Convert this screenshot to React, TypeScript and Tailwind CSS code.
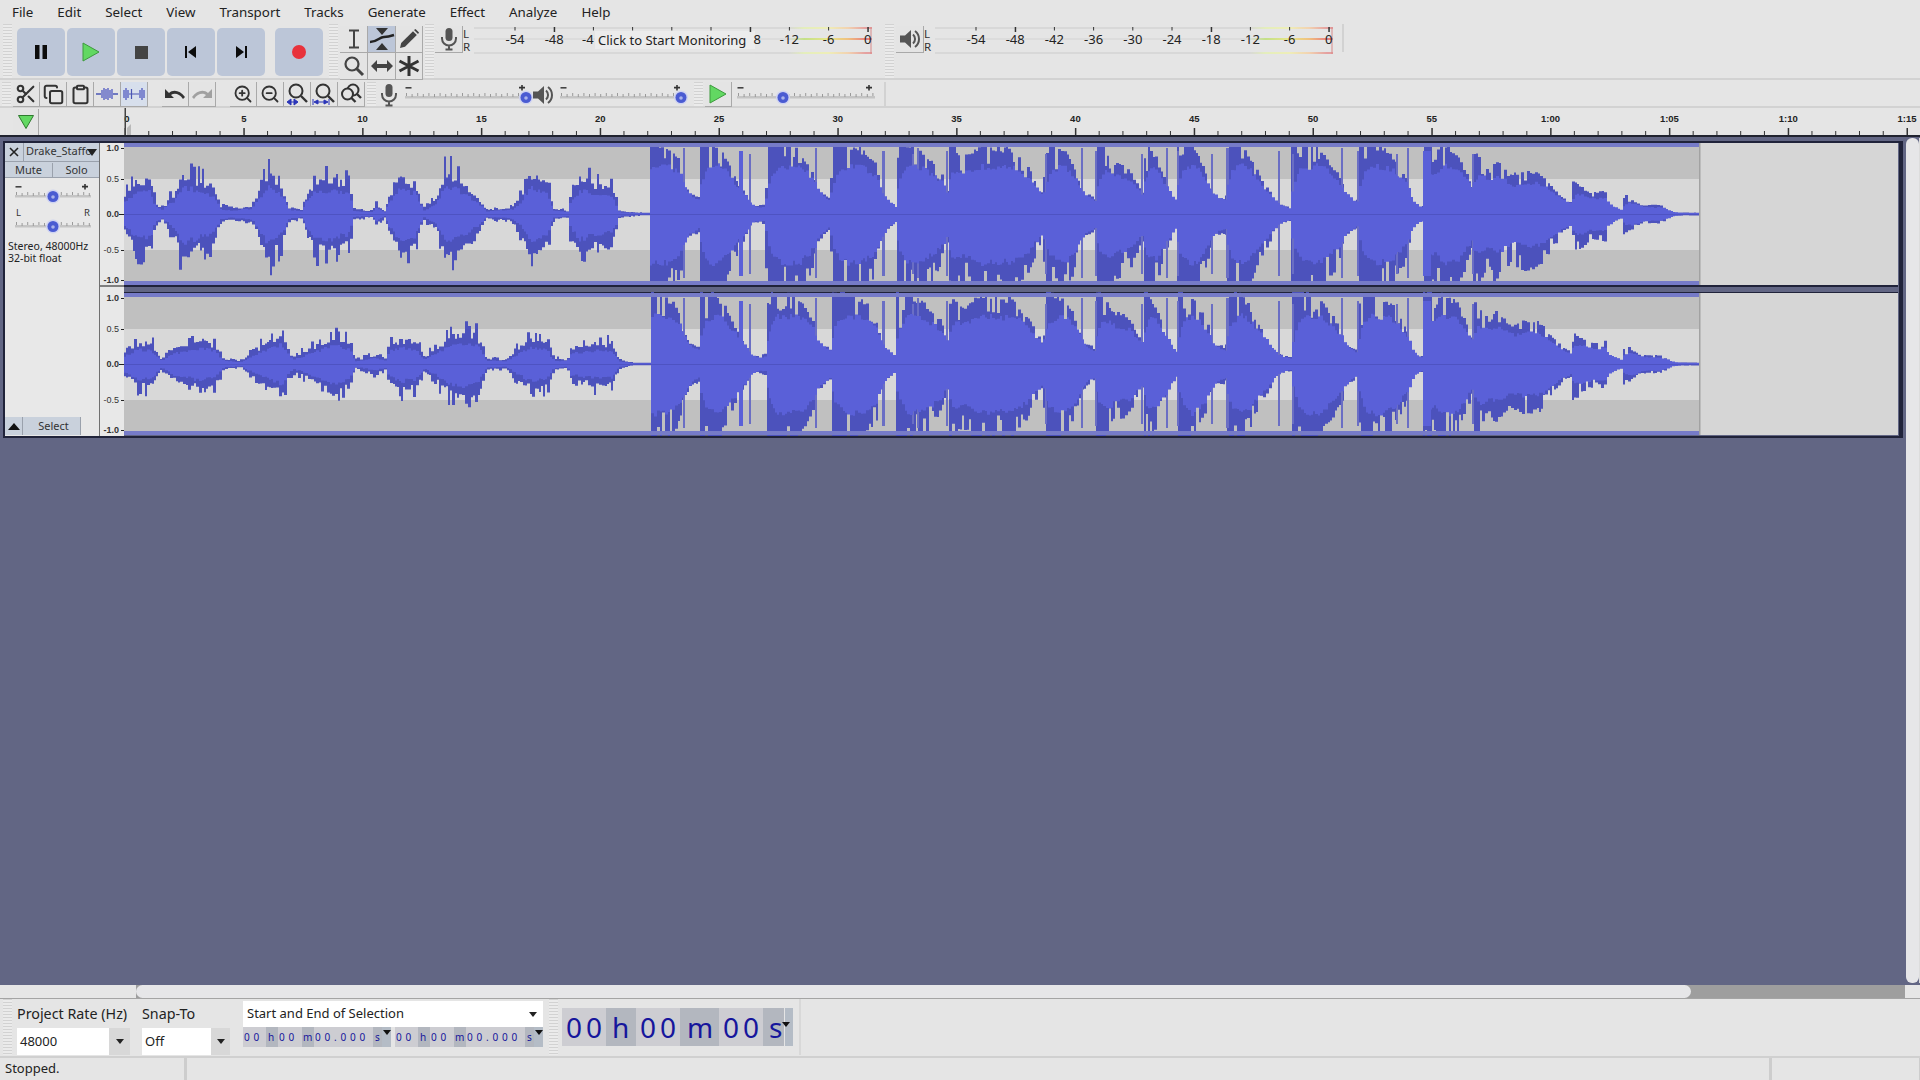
import React from "react";
import { Scissors, Copy, Clipboard, ZoomIn, ZoomOut } from "lucide-react";

type P = [number, number];
const z1 = (x: number) => 120 + x / 2.904;
const top1: P[] = ([[15,165],[50,100],[90,100],[100,180],[120,215],[160,150],[180,60],[240,110],[275,130],[290,205],[320,215],[380,205],[395,170],[430,60],[470,120],[490,210],[530,220],[540,165],[570,95],[610,90],[665,120],[680,220],[735,225],[742,195],[770,225],[780,170],[810,90],[860,110],[880,220],[920,175],[945,60],[1000,110],[1040,170],[1065,220],[1140,210],[1165,160],[1190,75],[1240,115],[1260,215],[1300,225],[1305,165],[1335,90],[1385,115],[1430,130],[1450,225],[1540,235]] as P[]).map(([x,y]) => [z1(x),(237-y)/205] as P);
const top2: P[] = ([[15,640],[50,600],[90,600],[120,665],[160,620],[240,590],[275,610],[300,665],[350,675],[400,625],[470,565],[500,660],[540,635],[620,570],[665,595],[685,670],[740,650],[775,665],[780,610],[820,585],[860,600],[885,660],[960,570],[1010,555],[1040,575],[1065,665],[1120,670],[1160,620],[1190,590],[1240,600],[1260,665],[1300,670],[1305,625],[1390,600],[1430,610],[1450,670],[1500,685],[1540,685]] as P[]).map(([x,y]) => [z1(x),(687-y)/205] as P);
const seg2: P[] = [[651,1.1],[667,.96],[680,.77],[683,.48],[690,.3],[700,.25],[701,1.1],[717,1],[727,.77],[737,.48],[747,.25],[753,.1],[765,.15],[767,1.1],[797,1],[813,.63],[817,.34],[830,.22],[832,1.1],[860,.95],[877,.72],[880,.3],[896,.1],[897,1.1],[923,.9],[933,.75],[942,.6],[947,.33],[948,1.1],[962,.8],[980,1],[993,.95],[1013,.95],[1027,.7],[1037,.45],[1043,.3],[1046,1.1],[1067,.9],[1077,.6],[1082,.35],[1095,.22],[1097,1.1],[1113,.75],[1127,.7],[1143,.3],[1145,1.1],[1157,.8],[1167,.4],[1177,.12],[1178,1.1],[1193,1],[1208,.55],[1213,.28],[1226,.28],[1227,1.1],[1243,1],[1260,.55],[1277,.15],[1291,.1],[1292,1.1],[1317,1],[1327,.8],[1342,.5],[1345,.3],[1357,.2],[1358,1.1],[1390,.9],[1407,.5],[1412,.1],[1423,.12],[1424,1.1],[1432,1.1],[1433,.75],[1440,1.05],[1457,.9],[1472,.4],[1473,.95],[1490,.6],[1495,.8],[1510,.55],[1523,.65],[1540,.6],[1558,.3],[1562,.25],[1572,.17],[1573,.47],[1590,.3],[1605,.33],[1608,.13],[1621,.06],[1622,.31],[1640,.13],[1660,.13],[1673,.02],[1700,.02]];
const spikes: P[] = [[684,2],[740,4],[750,2],[816,2],[883,3],[913,2],[918,2],[947,2],[1046,2],[1082,2],[1096,2],[1142,2],[1167,2],[1178,2],[1212,2],[1227,3],[1279,2],[1293,2],[1342,2],[1358,2],[1397,2],[1408,2],[1424,8],[1473,2]];

const interp = (pts: P[], x: number) => {
  if (x <= pts[0][0]) return pts[0][1];
  for (let i = 1; i < pts.length; i++) {
    if (x <= pts[i][0]) {
      const [a, b] = pts[i - 1];
      const [c, d] = pts[i];
      return b + ((d - b) * (x - a)) / (c - a);
    }
  }
  return pts[pts.length - 1][1];
};

const makeRng = (seed: number) => () => {
  seed = (seed * 1664525 + 1013904223) >>> 0;
  return seed / 4294967296;
};

const wavePaths = (seg1: P[], center: number, seed: number, lowK: number) => {
  const r = makeRng(seed);
  const up: P[] = [];
  const dn: P[] = [];
  const rmsU: P[] = [];
  const rmsD: P[] = [];
  let smooth = 1;
  let x = 125;
  const jag = () => {
    const t = r();
    if (t < 0.09) return 0.45 + 0.25 * r();
    if (t < 0.25) return 0.72 + 0.1 * r();
    return 0.92 + 0.1 * r();
  };
  while (x < 1700) {
    const w = r() < 0.5 ? 2 : 3;
    const early = x < 651;
    const e = early ? interp(seg1, x) : interp(seg2, x);
    let a: number, b: number, rm: number, rl: number;
    if (early) {
      a = r() < 0.28 ? e * (0.84 + 0.22 * r()) : e * (0.58 + 0.2 * r());
      b = r() < 0.28 ? e * (0.88 + 0.22 * r()) : e * (0.62 + 0.2 * r());
      rm = e * 0.47 * (0.88 + 0.24 * r());
      rl = e * 0.5 * (0.88 + 0.24 * r());
    } else {
      a = e * jag();
      const k = e > 0.3 ? lowK : 1.05;
      b = e * k * jag();
      smooth += (Math.min(e, 1) - smooth) * 0.4;
      rm = Math.min(smooth * 0.7, 0.68) * (0.93 + 0.14 * r());
      rl = Math.min(smooth * 0.72, 0.7) * (0.93 + 0.14 * r());
    }
    up.push([x, Math.max(Math.min(a, 1.03) * 70, 1.2)]);
    dn.push([x, Math.max(Math.min(b, 1.03) * 70, 1.2)]);
    rmsU.push([x, Math.max(rm * 70, 0.7)]);
    rmsD.push([x, Math.max(rl * 70, 0.7)]);
    x += w;
  }
  const build = (u: P[], d: P[]) => {
    let s = `M${u[0][0] - 125} ${center}`;
    u.forEach(([, v], i) => {
      const nx = i + 1 < u.length ? u[i + 1][0] : 1700;
      s += `V${(center - v).toFixed(1)}H${nx - 125}`;
    });
    for (let i = d.length - 1; i >= 0; i--) {
      s += `V${(center + d[i][1]).toFixed(1)}H${d[i][0] - 125}`;
    }
    return s + "Z";
  };
  return { peak: build(up, dn), rms: build(rmsU, rmsD) };
};

const Channel = ({ y, seg1, seed, lowK }: { y: number; seg1: P[]; seed: number; lowK: number }) => {
  const c = y + 71;
  const { peak, rms } = wavePaths(seg1, c, seed, lowK);
  return (
    <g>
      <rect x={0} y={y} width={1774} height={142} fill="#d6d6d6" />
      <rect x={0} y={y} width={1575} height={36} fill="#c0c0c0" />
      <rect x={0} y={y + 36} width={1575} height={71} fill="#d8d8d8" />
      <rect x={0} y={y + 107} width={1575} height={35} fill="#c0c0c0" />
      <path d={peak} fill="#4c52bc" />
      {spikes.map(([sx, sw], i) => (
        <rect key={i} x={sx - 125} y={c - 66 + (i % 3) * 3} width={sw} height={130 - (i % 3) * 5} fill={sw > 3 ? "#5a60d8" : "#6a6ec4"} />
      ))}
      <path d={rms} fill="#5a60d8" />
      <rect x={0} y={c} width={1575} height={1} fill="#4e53c2" />
      <rect x={0} y={y} width={1575} height={4} fill="#767bc8" />
      <rect x={0} y={y + 138} width={1575} height={4} fill="#767bc8" />
      <rect x={1575} y={y} width={1.5} height={142} fill="#a2a2a2" />
    </g>
  );
};

const Grip = () => (
  <div className="w-[9px] h-full shrink-0 mx-[2px] bg-[#ebebeb] bg-[repeating-linear-gradient(180deg,#d2d2d2_0,#d2d2d2_1px,transparent_1px,transparent_3px)]" />
);

const TBtn = ({ children }: { children: React.ReactNode }) => (
  <div className="w-[48px] h-[48px] rounded-[5px] bg-[#bcc6d8] flex items-center justify-center shrink-0">{children}</div>
);

const Btn = ({ children, on, tint, w }: { children: React.ReactNode; on?: boolean; tint?: boolean; w?: boolean }) => (
  <div
    className={`${w ? "w-full h-[27px]" : "w-[27px] h-[25px]"} shrink-0 flex items-center justify-center border-r border-b border-[#a9a9a9] ${
      on ? "bg-[#bcc6d8]" : tint ? "bg-[#d7dfec]" : "bg-[#e4e4e4]"
    }`}
  >
    {children}
  </div>
);

const MicIcon = () => (
  <svg width="22" height="24" viewBox="0 0 22 24">
    <rect x="7.5" y="1" width="7" height="13" rx="3.5" fill="#555" />
    <path d="M4 10v1.5a7 7 0 0 0 14 0V10M11 18.5V22M7.5 22.5h7" fill="none" stroke="#555" strokeWidth="2" />
  </svg>
);

const SpkIcon = () => (
  <svg width="22" height="22" viewBox="0 0 22 22">
    <path d="M1 7.5h5L12 2v18l-6-5.5H1z" fill="#555" />
    <path d="M14 6.5a6 6 0 0 1 0 9M16 3a10 10 0 0 1 0 16" fill="none" stroke="#555" strokeWidth="2" />
  </svg>
);

const Slider = ({ w, thumb, label }: { w: number; thumb: number; label?: boolean }) => {
  const ticks: number[] = [];
  for (let i = 2; i < w - 8; i += 5.6) ticks.push(i);
  return (
    <svg width={w} height={22} viewBox={`0 0 ${w} 22`} className="shrink-0">
      <rect x={1} y={12} width={w - 10} height={2.5} fill="#c4c4c4" />
      {ticks.map((t, i) => (
        <rect key={i} x={t} y={i % 2 ? 10 : 9} width={1} height={3} fill="#9a9a9a" />
      ))}
      {!label && <rect x={1.5} y={3} width={6} height={1.6} fill="#444" />}
      {!label && <path d={`M${w - 18} 3.6h6M${w - 15} 1v5.5`} stroke="#333" strokeWidth="1.6" fill="none" />}
      <circle cx={thumb} cy={13.5} r={7} fill="#cfd3f1" />
      <circle cx={thumb} cy={13.5} r={5.5} fill="#4a5bd2" />
      <circle cx={thumb} cy={14} r={1.8} fill="#aab2ea" />
    </svg>
  );
};

const Meter = ({ hideMid }: { hideMid?: boolean }) => {
  const labels = ["-54", "-48", "-42", "-36", "-30", "-24", "-18", "-12", "-6", "0"];
  const id = hideMid ? "a" : "b";
  return (
    <svg width={404} height={28} viewBox="0 0 404 28" className="shrink-0 font-['Noto_Sans',sans-serif]">
      <defs>
        <linearGradient id={`g${id}`} x1="0" x2="1" y1="0" y2="0">
          <stop offset="0" stopColor="#dcdcdc" />
          <stop offset="0.79" stopColor="#dcdcdc" />
          <stop offset="0.83" stopColor="#c4e088" />
          <stop offset="0.89" stopColor="#e6e688" />
          <stop offset="0.94" stopColor="#f0c080" />
          <stop offset="0.985" stopColor="#e88080" />
        </linearGradient>
        <linearGradient id={`t${id}`} x1="0" x2="1" y1="0" y2="0">
          <stop offset="0" stopColor="#d8d8d8" />
          <stop offset="0.79" stopColor="#d8d8d8" />
          <stop offset="0.83" stopColor="#e4eebc" />
          <stop offset="0.89" stopColor="#eeeeb8" />
          <stop offset="0.94" stopColor="#f2d2b0" />
          <stop offset="0.985" stopColor="#e4a0a0" />
        </linearGradient>
      </defs>
      <rect x={1} y={1} width={398} height={2} fill={`url(#t${id})`} />
      <rect x={1} y={12} width={398} height={2} fill={`url(#g${id})`} />
      <rect x={1} y={26} width={398} height={2} fill={`url(#t${id})`} />
      <rect x={397.5} y={1} width={1} height={27} fill="#d88a8a" />
      {hideMid && <rect x={122} y={5} width={160} height={18} fill="#ececec" />}
      {labels.map((l, i) => {
        const x = 42 + i * 39.2;
        const hidden = hideMid && i >= 3 && i <= 5;
        let txt = l;
        let anchor: "middle" | "start" | "end" = "middle";
        let tx = x;
        if (hideMid && i === 2) {
          txt = "-4";
          anchor = "start";
          tx = 109;
        }
        if (hideMid && i === 6) {
          txt = "8";
          anchor = "end";
          tx = 288;
        }
        return (
          <g key={l}>
            <rect x={x - 0.5} y={1} width={i % 5 === 1 || i === 9 ? 1.5 : 1} height={i % 5 === 1 || i === 9 ? 5 : 3.5} fill="#333" />
            {!hidden && (
              <text x={tx} y={17.5} fontSize={13} textAnchor={anchor} fill="#222">
                {txt}
              </text>
            )}
          </g>
        );
      })}
      {hideMid && (
        <text x={125} y={18.5} fontSize={13} fill="#222">
          Click to Start Monitoring
        </text>
      )}
    </svg>
  );
};

const LR = ({ narrow }: { narrow?: boolean }) => (
  <div className={`${narrow ? "w-[9px]" : "w-[10px]"} shrink-0 text-[11.5px] leading-[13px] text-[#333] pt-[1px]`}>
    <div>L</div>
    <div>R</div>
  </div>
);

const TimeRuler = () => {
  const ticks: number[] = [];
  for (let s = 0; s <= 75; s++) ticks.push(s);
  const lab = (s: number) => (s < 60 ? String(s) : `1:${String(s - 60).padStart(2, "0")}`);
  return (
    <svg width={1920} height={27} viewBox="0 0 1920 27" className="shrink-0 font-['Liberation_Sans',sans-serif]">
      {ticks.map((s) => {
        const x = 125 + s * 23.76;
        const major = s % 5 === 0;
        return (
          <g key={s}>
            <rect x={x - 0.5} y={major ? 20 : 23} width={major ? 1.5 : 1} height={major ? 7 : 4} fill="#333" />
            {major && (
              <text x={s === 0 ? x + 2 : x} y={14} fontSize={9.5} fontWeight={700} textAnchor="middle" fill="#222">
                {lab(s)}
              </text>
            )}
          </g>
        );
      })}
      <rect x={124.5} y={0} width={1.5} height={27} fill="#444" />
      <path d="M127 27v-7l4-4v11z" fill="#b9b9b9" />
    </svg>
  );
};

const VRuler = () => {
  const mk = (y: number) => {
    const items: [string, number, boolean][] = [
      ["1.0", 5, true],
      ["0.5", 36, false],
      ["0.0", 71, true],
      ["-0.5", 107, false],
      ["-1.0", 137, true],
    ];
    return items.map(([t, dy, b]) => (
      <g key={`${y}${t}`}>
        <text x={19} y={y + dy + 3} fontSize={9} fontWeight={b ? 700 : 400} textAnchor="end" fill="#333">
          {t}
        </text>
        <rect x={dy === 71 ? 19 : 21} y={y + dy} width={dy === 71 ? 5 : 3} height={1} fill="#222" />
      </g>
    ));
  };
  return (
    <svg width={24} height={293} viewBox="0 0 24 293" className="shrink-0 bg-[#e8e8e8] font-['Liberation_Sans',sans-serif]">
      {mk(0)}
      <rect x={0} y={142} width={24} height={2} fill="#7e7e7e" />
      <rect x={0} y={144} width={24} height={5} fill="#e8e8e8" />
      {mk(150)}
    </svg>
  );
};

type Block = [string, number, number, boolean?];

const TimeBox = ({ big, blocks }: { big?: boolean; blocks: Block[] }) => (
  <div className={`flex ${big ? "h-[38px] text-[28px] tracking-[4px]" : "h-[20px] text-[10px] tracking-[3.8px]"} text-[#16169c] leading-none font-['Noto_Sans',sans-serif] whitespace-nowrap`}>
    {blocks.map(([t, w, pl, alt], i) => (
      <div key={i} style={{ width: w, paddingLeft: pl }} className={`flex items-center ${t === "s" ? "tracking-normal" : ""} ${alt ? "bg-[#b3b7bf]" : "bg-[#cdcdd2]"}`}>
        {t}
      </div>
    ))}
    <div className={`${big ? "w-[8px] ml-[1px]" : "w-[9px]"} bg-[#b4bcc6] flex justify-center`}>
      <svg width="8" height="5" viewBox="0 0 8 5" className={big ? "mt-[14px] -ml-[6px] shrink-0" : "mt-[3px]"}>
        <path d="M0 0h8L4 5z" fill="#111" />
      </svg>
    </div>
  </div>
);

const Combo = ({ text, w, ww }: { text: string; w: string; ww: string }) => (
  <div className={`${w} h-[27px] flex bg-[#d8d8d8]`}>
    <div className={`${ww} bg-white flex items-center pl-[3px] text-[13px]`}>{text}</div>
    <div className="flex-1 flex items-center justify-center">
      <svg width="8" height="5" viewBox="0 0 8 5">
        <path d="M0 0h8L4 5z" fill="#222" />
      </svg>
    </div>
  </div>
);

const Lens = ({ c = "#444" }: { c?: string }) => (
  <svg width="22" height="22" viewBox="0 0 22 22">
    <circle cx="9" cy="9" r="6.5" fill="none" stroke={c} strokeWidth="2.2" />
    <path d="M13.5 13.5L20 20" stroke={c} strokeWidth="3" />
  </svg>
);

const TOOL = "grid grid-cols-[28px_28px_27px] grid-rows-[27px_27px] mt-[2px] shrink-0";

export default function App() {
  const menu = ["File", "Edit", "Select", "View", "Transport", "Tracks", "Generate", "Effect", "Analyze", "Help"];
  const small: Block[] = [
    ["00", 23, 1],
    ["h", 12, 2, true],
    ["00", 24, 1],
    ["m", 12, 1, true],
    ["00.000", 59, 1],
    ["s", 9, 2, true],
  ];
  const large: Block[] = [
    ["00", 44, 4],
    ["h", 30, 6, true],
    ["00", 44, 4],
    ["m", 39, 7, true],
    ["00", 44, 4],
    ["s", 21, 6, true],
  ];
  return (
    <div className="w-[1920px] h-[1080px] flex flex-col overflow-hidden bg-[#e5e5e5] font-['Noto_Sans',sans-serif] text-[13px] text-[#222]">
      {/* Menu */}
      <div className="h-[24px] shrink-0 flex items-center gap-[24px] pl-[12px] pt-[1px] text-[13.35px]">
        {menu.map((m) => (
          <span key={m}>{m}</span>
        ))}
      </div>

      {/* Toolbar row 1 */}
      <div className="h-[56px] shrink-0 flex border-b-2 border-[#d2d2d2] pl-[1px]">
        <div className="h-[54px] flex">
          <Grip />
          <div className="flex items-center gap-[2px] pl-[3px] pt-[2px]">
            <TBtn>
              <svg width="14" height="16" viewBox="0 0 14 16">
                <path d="M1 1h4.5v14H1zM8.5 1H13v14H8.5z" fill="#0c0c0c" />
              </svg>
            </TBtn>
            <TBtn>
              <svg width="18" height="20" viewBox="0 0 18 20">
                <path d="M1 1l16 9-16 9z" fill="#62d862" stroke="#3d9a3d" />
              </svg>
            </TBtn>
            <TBtn>
              <div className="w-[13px] h-[13px] bg-[#444]" />
            </TBtn>
            <TBtn>
              <svg width="14" height="14" viewBox="0 0 14 14">
                <path d="M1 1h2v12H1zM12 1v12L4 7z" fill="#0c0c0c" />
              </svg>
            </TBtn>
            <TBtn>
              <svg width="14" height="14" viewBox="0 0 14 14">
                <path d="M2 1v12l8-6zM11 1h2v12h-2z" fill="#0c0c0c" />
              </svg>
            </TBtn>
            <div className="w-[6px]" />
            <TBtn>
              <div className="w-[14px] h-[14px] rounded-full bg-[#e8323c]" />
            </TBtn>
          </div>
        </div>
        <div className="w-[4px]" />
        <Grip />
        <div className={TOOL}>
          <Btn w>
            <svg width="14" height="20" viewBox="0 0 14 20">
              <path d="M2 1.5h10M7 1.5v17M2 18.5h10" stroke="#444" strokeWidth="2" fill="none" />
            </svg>
          </Btn>
          <Btn w on>
            <svg width="26" height="24" viewBox="0 0 26 24">
              <path d="M7 1h12l-6 7zM7 23h12l-6-7z" fill="#333" />
              <path d="M1 15c8 0 9-5 14-5 4 0 7-1 10-2" stroke="#222" strokeWidth="2.4" fill="none" />
            </svg>
          </Btn>
          <Btn w>
            <svg width="22" height="22" viewBox="0 0 22 22">
              <path d="M2 20l1.2-5L15 3.2l3.8 3.8L7 18.8z" fill="#444" />
              <path d="M16 2l1.5-1 3.5 3.5-1 1.5z" fill="#444" />
            </svg>
          </Btn>
          <Btn w>
            <Lens />
          </Btn>
          <Btn w>
            <svg width="22" height="14" viewBox="0 0 22 14">
              <path d="M0 7l6-6v4h10V1l6 6-6 6V9H6v4z" fill="#444" />
            </svg>
          </Btn>
          <Btn w>
            <svg width="22" height="22" viewBox="0 0 22 22">
              <path d="M11 1v20M1.5 6l19 10M20.5 6l-19 10" stroke="#333" strokeWidth="3" />
            </svg>
          </Btn>
        </div>
        <Grip />
        <div className="flex h-[28px] mt-[2px]">
          <div className="w-[28px] -ml-[1px]">
            <Btn w>
              <MicIcon />
            </Btn>
          </div>
          <LR narrow />
          <div className="ml-[1px]">
            <Meter hideMid />
          </div>
        </div>
        <div className="w-[6px]" />
        <Grip />
        <div className="flex h-[28px] mt-[2px]">
          <div className="w-[28px]">
            <Btn w>
              <SpkIcon />
            </Btn>
          </div>
          <LR />
          <Meter />
        </div>
        <div className="ml-[4px] w-[2px] h-[28px] bg-[#d2d2d2]" />
      </div>

      {/* Toolbar row 2 */}
      <div className="h-[28px] shrink-0 flex items-start border-b-2 border-[#d2d2d2] pt-[2px]">
        <Grip />
        <div className="flex">
          <Btn>
            <Scissors size={22} strokeWidth={2.3} color="#333" />
          </Btn>
          <Btn>
            <Copy size={21} strokeWidth={2.3} color="#333" />
          </Btn>
          <Btn>
            <Clipboard size={21} strokeWidth={2.3} color="#333" />
          </Btn>
          <Btn>
            <svg width="22" height="14" viewBox="0 0 22 14">
              <path d="M0 7h5M17 7h5" stroke="#4a55b4" strokeWidth="1.4" />
              <path d="M6 3v8M8 1v12M10 2v10M12 1v12M14 3v8M16 2v10" stroke="#5a63c4" strokeWidth="1.4" />
            </svg>
          </Btn>
          <Btn tint>
            <svg width="22" height="14" viewBox="0 0 22 14">
              <path d="M1 3v8M3 1v12M5 3v8M17 3v8M19 1v12M21 3v8" stroke="#5a63c4" strokeWidth="1.4" />
              <path d="M6 7h10M8.5 2v10" stroke="#4a55b4" strokeWidth="1.2" />
            </svg>
          </Btn>
        </div>
        <div className="w-[14px]" />
        <div className="flex">
          <Btn>
            <svg width="22" height="14" viewBox="0 0 22 14">
              <path d="M1 2v9h9L7 8c3-2 8-2 12 4l2-2C16 3 9 2 5 6z" fill="#333" />
            </svg>
          </Btn>
          <Btn>
            <svg width="22" height="14" viewBox="0 0 22 14" className="-scale-x-100">
              <path d="M1 2v9h9L7 8c3-2 8-2 12 4l2-2C16 3 9 2 5 6z" fill="#a0a0a0" />
            </svg>
          </Btn>
        </div>
        <div className="w-[14px]" />
        <div className="flex">
          <Btn>
            <ZoomIn size={20} strokeWidth={2.2} color="#333" />
          </Btn>
          <Btn>
            <ZoomOut size={20} strokeWidth={2.2} color="#333" />
          </Btn>
          <Btn>
            <svg width="24" height="24" viewBox="0 0 24 24">
              <circle cx="11" cy="9" r="6.5" fill="none" stroke="#333" strokeWidth="2" />
              <path d="M16 14l6 6" stroke="#333" strokeWidth="2.4" />
              <path d="M2 20l4-3v6zM13 20l-4-3v6zM5 20h5" fill="#2b35b8" stroke="#2b35b8" />
            </svg>
          </Btn>
          <Btn>
            <svg width="24" height="24" viewBox="0 0 24 24">
              <circle cx="11" cy="9" r="6.5" fill="none" stroke="#333" strokeWidth="2" />
              <path d="M16 14l6 6" stroke="#333" strokeWidth="2.4" />
              <path d="M1 17v6M17 17v6M2 20l4-2v4zM16 20l-4-2v4zM5 20h8" fill="#2b35b8" stroke="#2b35b8" />
            </svg>
          </Btn>
          <Btn>
            <svg width="24" height="24" viewBox="0 0 24 24">
              <circle cx="14" cy="8" r="5.5" fill="none" stroke="#333" strokeWidth="2" />
              <circle cx="8.5" cy="12" r="5.5" fill="#e4e4e4" stroke="#333" strokeWidth="2" />
              <path d="M12.5 16l4 4M18 12l4 4" stroke="#333" strokeWidth="2.4" />
            </svg>
          </Btn>
        </div>
        <Grip />
        <div className="flex items-center h-[25px]">
          <div className="w-[22px] flex justify-center">
            <MicIcon />
          </div>
          <div className="w-[4px]" />
          <Slider w={133} thumb={122} />
          <div className="w-[22px] -ml-[5px] flex justify-center">
            <SpkIcon />
          </div>
          <div className="w-[5px]" />
          <Slider w={133} thumb={122} />
        </div>
        <Grip />
        <Btn>
          <svg width="18" height="20" viewBox="0 0 18 20">
            <path d="M1 1l16 9-16 9z" fill="#62d862" stroke="#3d9a3d" />
          </svg>
        </Btn>
        <div className="w-[4px]" />
        <div className="h-[25px] flex items-center">
          <Slider w={148} thumb={47} />
        </div>
        <div className="w-[2px] h-[26px] bg-[#d2d2d2]" />
      </div>

      {/* Time ruler */}
      <div className="h-[29px] shrink-0 relative border-b-2 border-[#20232f]">
        <TimeRuler />
        <div className="absolute left-[13px] top-[1px] w-[26px] h-[26px] bg-[#e4e4e4] border-r border-[#a9a9a9] flex items-center justify-center">
          <svg width="16" height="14" viewBox="0 0 16 14">
            <path d="M0.5 0.5h15L8 13.5z" fill="#62d862" stroke="#2f7a2f" />
          </svg>
        </div>
      </div>

      {/* Track area */}
      <div className="flex-1 flex min-h-0 bg-[#626684]">
        <div className="flex-1 pl-[3px] pt-[4px] pr-[2px]">
          <div className="flex h-[297px] border-l-2 border-t-2 border-b-2 border-r-[4px] border-[#20233a]">
            <div className="w-[95px] shrink-0 flex flex-col bg-[#e8e8e8] text-[#333]">
              <div className="flex h-[18px] bg-[#c9d1dc]">
                <div className="w-[19px] flex items-center justify-center border-r border-[#9aa1ac]">
                  <svg width="10" height="10" viewBox="0 0 10 10">
                    <path d="M1 1l8 8M9 1l-8 8" stroke="#222" strokeWidth="1.6" />
                  </svg>
                </div>
                <div className="flex-1 relative flex items-center pl-[2px] pb-[1px] text-[11px] overflow-hidden whitespace-nowrap">
                  Drake_Staffo
                  <svg width="10" height="7" viewBox="0 0 10 7" className="absolute right-[3px] top-[6px]">
                    <path d="M0 0h10L5 7z" fill="#222" />
                  </svg>
                </div>
              </div>
              <div className="flex h-[17px] text-[11px] bg-[#c9d1dc] border-t border-b border-[#9aa1ac] pt-[1px]">
                <div className="w-[48px] border-r border-[#9aa1ac] flex items-center justify-center">Mute</div>
                <div className="flex-1 flex items-center justify-center">Solo</div>
              </div>
              <div className="pl-[9px] pt-[5px]">
                <Slider w={86} thumb={39} />
              </div>
              <div className="relative pl-[9px] pt-[8px]">
                <Slider w={86} thumb={39} label />
                <span className="absolute left-[11px] top-[1px] text-[9.5px] text-[#333]">L</span>
                <span className="absolute left-[79px] top-[1px] text-[9.5px] text-[#333]">R</span>
              </div>
              <div className="pl-[3px] pt-[5px] text-[10.5px] leading-[12px] text-[#222]">
                <div>Stereo, 48000Hz</div>
                <div>32-bit float</div>
              </div>
              <div className="flex-1" />
              <div className="flex h-[19px] text-[11px] pb-[1px]">
                <div className="w-[18px] bg-[#c9d1dc] border-r border-[#9aa1ac] flex items-center justify-center">
                  <svg width="12" height="7" viewBox="0 0 12 7">
                    <path d="M0 7h12L6 0z" fill="#111" />
                  </svg>
                </div>
                <div className="w-[58px] bg-[#c9d1dc] border-r border-[#9aa1ac] flex items-center justify-center pl-[4px]">Select</div>
              </div>
            </div>
            <div className="w-[25px] shrink-0 border-r border-l border-[#707070] bg-[#e8e8e8] -ml-[1px] pl-0">
              <VRuler />
            </div>
            <svg width={1774} height={293} viewBox="0 0 1774 293" className="shrink-0">
              <Channel y={0} seg1={top1} seed={7} lowK={1.25} />
              <rect x={0} y={142} width={1774} height={2} fill="#20233a" />
              <rect x={0} y={144} width={1774} height={5} fill="#626684" />
              <rect x={0} y={149} width={1774} height={1} fill="#20233a" />
              <Channel y={150} seg1={top2} seed={29} lowK={1.12} />
            </svg>
          </div>
        </div>
        <div className="w-[15px] shrink-0 flex pt-[1px] pb-[2px]">
          <div className="w-[13px] ml-[1px] rounded-[6px] bg-[#e6e6e8]" />
          <div className="w-[1px] bg-[#dcdcdc]" />
        </div>
      </div>

      {/* Horizontal scrollbar */}
      <div className="h-[14px] shrink-0 flex border-b border-[#a4a4a4] bg-[#9e9e9e]">
        <div className="w-[136px] bg-[#e6e6e6]" />
        <div className="w-[1555px] rounded-[7px] bg-[#e6e6e8]" />
        <div className="flex-1" />
        <div className="w-[15px] bg-[#e6e6e6]" />
      </div>

      {/* Selection toolbar */}
      <div className="h-[57px] shrink-0 flex">
        <div className="h-[56px] flex pl-[1px]">
          <Grip />
          <div className="w-[114px] ml-[3px] flex flex-col">
            <div className="h-[29px] flex items-center text-[14.3px] whitespace-nowrap">Project Rate (Hz)</div>
            <Combo text="48000" w="w-[113px]" ww="w-[92px]" />
          </div>
          <div className="w-[89px] ml-[11px] flex flex-col">
            <div className="h-[29px] flex items-center text-[14.3px]">Snap-To</div>
            <Combo text="Off" w="w-[88px]" ww="w-[69px]" />
          </div>
          <div className="ml-[12px] w-[300px] flex flex-col pt-[2px]">
            <div className="h-[26px] flex bg-white items-center pl-[4px] text-[13px] justify-between pr-[6px]">
              <span>Start and End of Selection</span>
              <svg width="8" height="5" viewBox="0 0 8 5">
                <path d="M0 0h8L4 5z" fill="#222" />
              </svg>
            </div>
            <div className="flex justify-between">
              <TimeBox blocks={small} />
              <TimeBox blocks={small} />
            </div>
          </div>
        </div>
        <div className="w-[4px]" />
        <div className="h-[56px]">
          <Grip />
        </div>
        <div className="pt-[9px] pl-[2px]">
          <TimeBox big blocks={large} />
        </div>
        <div className="ml-[6px] w-[2px] h-[56px] bg-[#d8d8d8]" />
      </div>

      {/* Status bar */}
      <div className="h-[24px] shrink-0 flex border-t-2 border-[#d0d0d0] text-[13px]">
        <div className="w-[187px] pl-[5px] flex items-center border-r-[3px] border-[#cdcdcd]">Stopped.</div>
        <div className="flex-1 border-r-[3px] border-[#cdcdcd]" />
        <div className="w-[148px] border-r border-[#cdcdcd]" />
      </div>
    </div>
  );
}
